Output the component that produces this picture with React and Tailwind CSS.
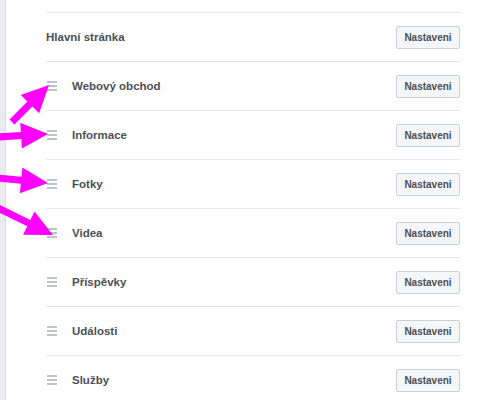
import React from 'react';

const items = ['Webový obchod', 'Informace', 'Fotky', 'Videa', 'Příspěvky', 'Události', 'Služby'];

const arrows = [
  [[12, 122], [49, 85]],
  [[-2, 137], [48, 134]],
  [[-2, 178], [48, 183]],
  [[-2, 208], [53, 235]],
];

// polygon points for a block arrow from tail to tip
function arrowPoints([tx, ty], [hx, hy]) {
  const len = Math.hypot(hx - tx, hy - ty);
  const ux = (hx - tx) / len;
  const uy = (hy - ty) / len;
  const px = -uy;
  const py = ux;
  const head = 27;
  const hw = 13;
  const sw = 3.5;
  const bx = hx - ux * head;
  const by = hy - uy * head;
  const pts = [
    [tx + px * sw, ty + py * sw],
    [bx + px * sw, by + py * sw],
    [bx + px * hw, by + py * hw],
    [hx, hy],
    [bx - px * hw, by - py * hw],
    [bx - px * sw, by - py * sw],
    [tx - px * sw, ty - py * sw],
  ];
  return pts.map(p => p.join(',')).join(' ');
}

const Button = () => (
  <button className="h-[23px] w-[64px] rounded-[2px] border border-[#ccd0d5] bg-[#f5f6f7] text-[10px] font-bold text-[#4b4f56]">
    Nastaveni
  </button>
);

const Handle = () => (
  <div className="flex w-[10px] flex-col gap-[2px]">
    <div className="h-[2px] bg-[#bec2c9]" />
    <div className="h-[2px] bg-[#bec2c9]" />
    <div className="h-[2px] bg-[#bec2c9]" />
  </div>
);

export default function App() {
  return (
    <div className="relative flex h-[400px] w-[492px] overflow-hidden bg-white font-['Liberation_Sans',Arial,sans-serif]">
      <div className="w-[6px] shrink-0 border-r border-[#dddfe2] bg-[#e9ebee]" />
      <div className="ml-[40px] w-[414px] pt-[12px]">
        <div className="flex h-[49px] items-center justify-between border-t border-[#e5e6e9]">
          <span className="pt-[1px] text-[11.5px] font-bold text-[#4b4f56]">Hlavní stránka</span>
          <Button />
        </div>
        {items.map(name => (
          <div key={name} className="flex h-[49px] items-center justify-between border-t border-[#e5e6e9]">
            <div className="flex items-center">
              <div className="pl-[1px]">
                <Handle />
              </div>
              <span className="ml-[15px] pt-[1px] text-[11.5px] font-bold text-[#4b4f56]">{name}</span>
            </div>
            <Button />
          </div>
        ))}
      </div>
      <svg className="absolute left-0 top-0" width="492" height="400">
        {arrows.map(([a, b], i) => (
          <polygon key={i} points={arrowPoints(a, b)} fill="#ff00ff" />
        ))}
      </svg>
    </div>
  );
}
